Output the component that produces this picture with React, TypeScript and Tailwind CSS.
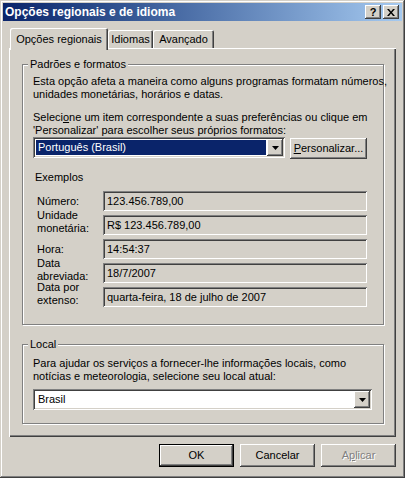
import React from 'react';

// classic 3D bevels
const raised =
  'shadow-[inset_-1px_-1px_#404040,inset_1px_1px_#ffffff,inset_-2px_-2px_#808080,inset_2px_2px_#d4d0c8]';
const sunken =
  'shadow-[inset_1px_1px_#808080,inset_-1px_-1px_#ffffff,inset_2px_2px_#404040,inset_-2px_-2px_#d4d0c8]';

const examples = [
  { label: ['Número:'], value: '123.456.789,00' },
  { label: ['Unidade', 'monetária:'], value: 'R$ 123.456.789,00' },
  { label: ['Hora:'], value: '14:54:37' },
  { label: ['Data', 'abreviada:'], value: '18/7/2007' },
  { label: ['Data por', 'extenso:'], value: 'quarta-feira, 18 de julho de 2007' },
];

const DropArrow = () => (
  <div className={`w-[16px] h-full flex items-center justify-center bg-[#d4d0c8] ${raised}`}>
    <svg width="7" height="4" viewBox="0 0 7 4">
      <polygon points="0,0 7,0 3.5,4" fill="#000" />
    </svg>
  </div>
);

const GroupBox: React.FC<{ title: string; className?: string; children: React.ReactNode }> = ({
  title,
  className,
  children,
}) => (
  <div
    className={`relative border border-[#808080] shadow-[inset_1px_1px_#ffffff,1px_1px_#ffffff] ${className ?? ''}`}
  >
    <span className="absolute -top-[7px] left-[5px] px-[2px] bg-[#d4d0c8] leading-[13px]">{title}</span>
    {children}
  </div>
);

const Button: React.FC<{ children: React.ReactNode; primary?: boolean; disabled?: boolean }> = ({
  children,
  primary,
  disabled,
}) => (
  <div
    className={`w-[75px] h-[23px] flex items-center justify-center bg-[#d4d0c8] ${raised} ${
      primary ? 'border border-black' : ''
    } ${disabled ? 'text-[#808080] [text-shadow:1px_1px_0_#ffffff]' : ''}`}
  >
    {children}
  </div>
);

export default function App() {
  return (
    <div className="w-[405px] h-[478px] bg-[#d4d0c8] p-[3px] font-['Liberation_Sans',Arial,sans-serif] text-[11px] leading-[13px] text-black shadow-[inset_-1px_-1px_#404040,inset_1px_1px_#d4d0c8,inset_-2px_-2px_#808080,inset_2px_2px_#ffffff]">
      {/* Title bar */}
      <div className="h-[18px] flex items-center pl-[2px] pr-[3px] bg-linear-to-r from-[#0a246a] to-[#a6caf0]">
        <span className="font-bold text-white text-[12px]">Opções regionais e de idioma</span>
        <div className="ml-auto flex gap-[2px]">
          <div className={`w-[16px] h-[14px] flex items-center justify-center bg-[#d4d0c8] font-bold text-[11px] leading-none ${raised}`}>
            ?
          </div>
          <div className={`w-[16px] h-[14px] flex items-center justify-center bg-[#d4d0c8] ${raised}`}>
            <svg width="8" height="7" viewBox="0 0 8 7">
              <path d="M0 0h2l2 2.5L6 0h2L5 3.5 8 7H6L4 4.5 2 7H0l3-3.5z" fill="#000" />
            </svg>
          </div>
        </div>
      </div>

      {/* Tabs */}
      <div className="mt-[7px] h-[20px] pl-[7px] flex items-end">
        <div className="relative z-10 w-[98px] h-[22px] -mb-[2px] pt-[5px] text-center bg-[#d4d0c8] rounded-t-[2px] shadow-[inset_1px_1px_#ffffff,inset_-1px_0_#404040,inset_-2px_0_#808080]">
          Opções regionais
        </div>
        <div className="w-[45px] h-[18px] pt-[3px] text-center shadow-[inset_1px_1px_#ffffff,inset_-1px_0_#404040,inset_-2px_0_#808080] rounded-t-[2px]">
          Idiomas
        </div>
        <div className="w-[61px] h-[18px] pt-[3px] text-center shadow-[inset_1px_1px_#ffffff,inset_-1px_0_#404040,inset_-2px_0_#808080] rounded-t-[2px]">
          Avançado
        </div>
      </div>

      {/* Tab panel */}
      <div className="mx-[6px] h-[389px] pt-[16px] pl-[13px] pr-[12px] shadow-[inset_1px_1px_#ffffff,inset_-1px_-1px_#404040,inset_-2px_-2px_#808080]">
        <GroupBox title="Padrões e formatos" className="pt-[10px] pl-[10px] pb-[17px]">
          <p className="whitespace-nowrap">
            Esta opção afeta a maneira como alguns programas formatam números,
            <br />
            unidades monetárias, horários e datas.
          </p>
          <p className="mt-[10px] whitespace-nowrap">
            Seleci<u>o</u>ne um item correspondente a suas preferências ou clique em
            <br />
            'Personalizar' para escolher seus próprios formatos:
          </p>
          <div className="flex gap-[5px]">
            <div className={`w-[252px] h-[21px] p-[2px] flex bg-white ${sunken}`}>
              <div className="flex-1 m-[1px] pl-[2px] flex items-center bg-[#0a246a] text-white">
                Português (Brasil)
              </div>
              <DropArrow />
            </div>
            <div className={`w-[77px] h-[21px] mt-[1px] flex items-center justify-center ${raised}`}>
              <span>
                <u>P</u>ersonalizar...
              </span>
            </div>
          </div>

          <div className="mt-[12px] pl-[2px]">Exemplos</div>
          <div className="mt-[7px] flex flex-col gap-[4px]">
            {examples.map((row) => (
              <div
                key={row.value}
                className={`h-[20px] flex ${row.label.length > 1 ? 'items-end' : 'items-center'}`}
              >
                <div className="w-[70px] shrink-0 pl-[4px] leading-[13px]">
                  {row.label.map((l) => (
                    <div key={l}>{l}</div>
                  ))}
                </div>
                <div className={`w-[264px] h-[20px] pl-[4px] flex items-center whitespace-nowrap ${sunken}`}>
                  {row.value}
                </div>
              </div>
            ))}
          </div>
        </GroupBox>

        <GroupBox title="Local" className="mt-[19px] pt-[12px] pl-[10px] pb-[13px]">
          <p className="whitespace-nowrap">
            Para a<u>j</u>udar os serviços a fornecer-lhe informações locais, como
            <br />
            notícias e meteorologia, selecione seu local atual:
          </p>
          <div className={`mt-[6px] w-[339px] h-[21px] p-[2px] flex bg-white ${sunken}`}>
            <div className="flex-1 pl-[3px] flex items-center">Brasil</div>
            <DropArrow />
          </div>
        </GroupBox>
      </div>

      {/* Dialog buttons */}
      <div className="mt-[7px] mr-[6px] flex justify-end gap-[6px]">
        <Button primary>OK</Button>
        <Button>Cancelar</Button>
        <Button disabled>
          <span>
            A<u>p</u>licar
          </span>
        </Button>
      </div>
    </div>
  );
}
